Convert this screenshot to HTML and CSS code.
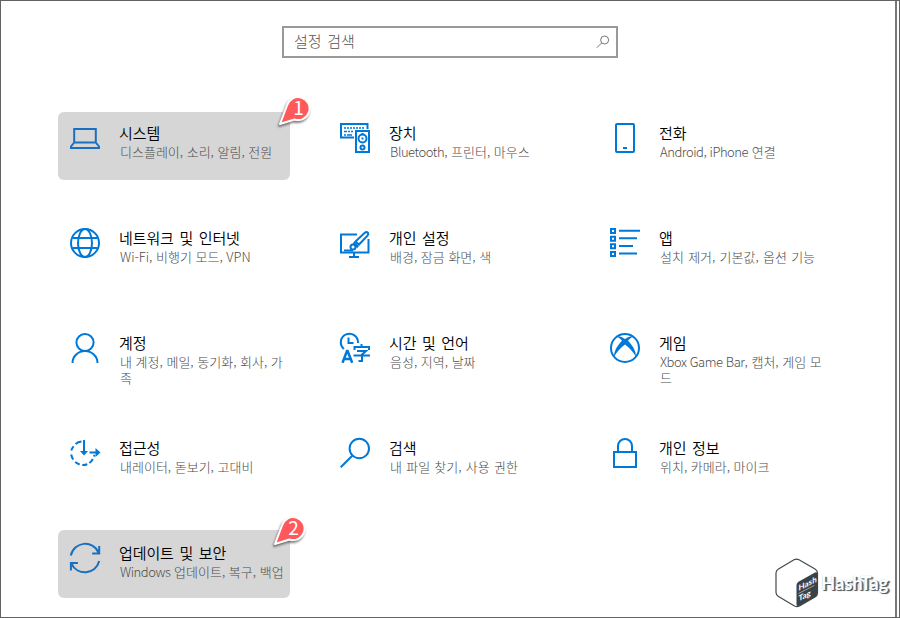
FILE: index.html
```html
<!DOCTYPE html>
<html lang="ko">
<head>
<meta charset="utf-8">
<title>설정</title>
<link rel="stylesheet" href="styles.css">
</head>
<body>
<div class="window">
<div class="search">
<span>설정 검색</span>
<svg width="14" height="14" viewBox="0 0 14 14"><circle cx="8.6" cy="5" r="4"/><path d="M5.7 7.9L.8 12.8"/></svg>
</div>

<div class="grid">
<div class="tile active">
<svg class="icon" viewBox="0 0 30 30"><path d="M4.200 6h21.600v13.500H4.200zM4.200 19.500L1 23.500v1.500h28v-1.500l-3.200-4"/></svg>
<div class="text"><h2>시스템</h2><p>디스플레이, 소리, 알림, 전원</p></div>
<svg class="badge" width="44" height="40" viewBox="0 0 44 40"><path class="pin" d="M10 31L17 12.500A11.500 11.500 0 1 1 24.500 26.500z"/><text x="28.500" y="22">1</text></svg>
</div>

<div class="tile">
<svg class="icon" viewBox="0 0 30 30"><path d="M14 14.500H1V1h26.500v5"/><path class="keys" d="M4 5h2m1 0h2m1 0h2m1 0h2m1 0h2m1 0h2m1 0h2M4 8.500h3m1 0h2m1 0h2M4 12h2m1 0h5"/><path d="M16 8h13v21H16z"/><circle cx="22.500" cy="15.500" r="4"/><circle cx="22.500" cy="24.500" r="2"/><path class="fill" d="M21.500 14.500h2v2h-2zM21.500 10h2v1h-2z"/></svg>
<div class="text"><h2>장치</h2><p><span class="en">Bluetooth</span>, 프린터, 마우스</p></div>
</div>

<div class="tile">
<svg class="icon" viewBox="0 0 30 30"><rect x="6" y="1" width="18" height="28" rx="1"/><path d="M13 25h4"/></svg>
<div class="text"><h2>전화</h2><p><span class="en">Android, iPhone</span> 연결</p></div>
</div>

<div class="tile">
<svg class="icon" viewBox="0 0 30 30"><circle cx="15" cy="15" r="14"/><ellipse cx="15" cy="15" rx="7" ry="14"/><path d="M2.500 10h25M2.500 20h25"/></svg>
<div class="text"><h2>네트워크 및 인터넷</h2><p>Wi-Fi, 비행기 모드, VPN</p></div>
</div>

<div class="tile">
<svg class="icon" viewBox="0 0 30 30"><path d="M17 6.500H1v18h27.500V11M14 25v4M9 29h10"/><path d="M15.500 13.500L24.500 5q2-1.500 3.200-.4t-.2 3L19 16.500z"/><path class="fill" d="M14.200 13.500l4.800 4.500-1.800 2.200-4.500-4.700z"/><circle cx="13" cy="19" r="2.500"/><path d="M4 22.500h9"/></svg>
<div class="text"><h2>개인 설정</h2><p>배경, 잠금 화면, 색</p></div>
</div>

<div class="tile">
<svg class="icon" viewBox="0 0 30 30"><path d="M1 1h4v4H1zM1 8.700h4v4H1zM1 16.300h4v4H1zM1 24h4v4H1zM9 2.700h21M9 10.300h18M9 17.900h14M9 25.500h18"/></svg>
<div class="text"><h2>앱</h2><p class="wide">설치 제거, 기본값, 옵션 기능</p></div>
</div>

<div class="tile">
<svg class="icon" viewBox="0 0 30 30"><circle cx="15" cy="9.500" r="8.600"/><path d="M2.500 30a12.500 12 0 0 1 25 0"/></svg>
<div class="text"><h2>계정</h2><p>내 계정, 메일, 동기화, 회사, 가족</p></div>
</div>

<div class="tile">
<svg class="icon" viewBox="0 0 30 30"><path d="M4 16A8.600 8.600 0 1 1 18 10M8.500 4.500V10h5"/><path class="heavy" d="M2.500 29.800L7 18h.6l4.600 11.800M4 26h6.500"/><path d="M21.500 11v3M14.500 17v-3h14.500v3M17 18h9l-4 3.500v6.500h-3.500M13.500 22.500H30"/></svg>
<div class="text"><h2>시간 및 언어</h2><p>음성, 지역, 날짜</p></div>
</div>

<div class="tile">
<svg class="icon" viewBox="0 0 30 30"><circle cx="15" cy="15" r="14"/><path class="fill" d="M6 3.500C9 2.500 12 4 15 6c3-2 6-3.500 9-2.500-2 .5-4.500 2.300-6 4.300 4.500 4.700 8.500 11 7.800 15.700C23.500 19 19 14.500 15 11.500 11 14.500 6.500 19 4.200 23.500 3.500 18.800 7.500 12.500 12 7.800 10.500 5.800 8 4 6 3.500z"/></svg>
<div class="text"><h2>게임</h2><p><span class="en">Xbox Game Bar</span>, 캡처, 게임 모드</p></div>
</div>

<div class="tile">
<svg class="icon" viewBox="0 0 30 30"><path d="M11.500 3.600A12 12 0 0 0 5.500 6M3.600 8.300A12 12 0 0 0 1.300 12.500M1.200 16.500a12 12 0 0 0 2.100 5M5.200 24a12 12 0 0 0 4.500 2.500M12.300 27a12 12 0 0 0 5-.8M19.400 25a12 12 0 0 0 3.500-4M24 18.500l.5-1.700M14 2v13M19.500 14.500H28"/><path class="fill" d="M10 13h8L14 17.500zM25.500 10l5 4.500-5 4.500z"/></svg>
<div class="text"><h2>접근성</h2><p>내레이터, 돋보기, 고대비</p></div>
</div>

<div class="tile">
<svg class="icon" viewBox="0 0 30 30"><circle cx="19.300" cy="10.500" r="9.700"/><path d="M12.500 17.500L.7 29.300"/></svg>
<div class="text"><h2>검색</h2><p class="wide">내 파일 찾기, 사용 권한</p></div>
</div>

<div class="tile">
<svg class="icon" viewBox="0 0 30 30"><path d="M4 14h22v15H4zM8 14V8a7 7 0 0 1 14 0v6"/></svg>
<div class="text"><h2>개인 정보</h2><p>위치, 카메라, 마이크</p></div>
</div>

<div class="tile active last">
<svg class="icon" viewBox="0 0 30 30"><path d="M.8 12.500C4 -1.500 23 -3.500 28.500 9.500M29.200 3v7.500h-7M29.200 18C26 31.500 7 33.500 1.500 20.500M.9 27.500v-7.500h7"/></svg>
<div class="text"><h2>업데이트 및 보안</h2><p><span class="en">Windows</span> 업데이트, 복구, 백업</p></div>
<svg class="badge" width="44" height="40" viewBox="0 0 44 40"><path class="pin" d="M10 31L17 12.500A11.500 11.500 0 1 1 24.500 26.500z"/><text x="28.500" y="22">2</text></svg>
</div>
</div>

<div class="watermark">
<svg width="44" height="50" viewBox="0 0 44 50"><path class="cube" d="M19 1.700q2.500-1.300 5 0L40 11q2.500 1.500 2.500 4v20q0 2.500-2.500 4l-15.500 9q-2.500 1.300-5 0L3.500 38.500Q1 37 1 34.500V15q0-2.500 2.500-4z"/><path class="side" d="M21.500 27q0-2 2-3.200L40 14.500q2.500-1 2.500 1.500v19q0 2.500-2.500 4l-16 9q-2.500 1-2.500-1.500z"/><g transform="translate(23.500 33) skewY(-27)"><text x="0" y="0">Hash</text><path d="M0 2.500h16"/><text x="0" y="10.500">Tag</text></g></svg>
<span>HashTag</span>
</div>
</div>
</body>
</html>
```
FILE: styles.css
```css
body {
  margin: 0;
  background: #fff;
  font-family: "Noto Sans CJK KR", sans-serif;
}

.window {
  position: relative;
  box-sizing: border-box;
  width: 900px;
  height: 618px;
  padding-top: 25px;
  border: 1px solid #626262;
  overflow: hidden;
}

/* scrollbar edge */
.window::after {
  content: "";
  position: absolute;
  top: 0;
  right: 2px;
  width: 2px;
  height: 100%;
  background: #777;
}

.search {
  display: flex;
  align-items: center;
  justify-content: space-between;
  box-sizing: border-box;
  width: 336px;
  height: 32px;
  margin-left: 281px;
  padding: 0 6px 3px 10px;
  border: 2px solid #999;
  color: #505050;
  font-size: 15px;
  font-weight: 300;
  word-spacing: 1.5px;
}

.search svg {
  fill: none;
  stroke: #777;
  stroke-width: 1;
  margin-top: 3px;
}

.grid {
  display: grid;
  grid-template-columns: 232px 232px 232px;
  grid-auto-rows: 68px;
  gap: 37px 38px;
  margin: 54px 0 0 57px;
}

.tile {
  position: relative;
  display: flex;
  gap: 20px;
  box-sizing: border-box;
  padding: 11px 0 0 12px;
  border-radius: 6px;
}

.active {
  background: #d6d6d6;
}

.last {
  height: 68px;
  margin-top: -2px;
  padding-top: 13px;
}

.icon {
  flex: none;
  width: 30px;
  height: 30px;
  overflow: visible;
  fill: none;
  stroke: #0078d7;
  stroke-width: 2;
}

.active .icon {
  stroke: #1870be;
}

.icon .fill {
  fill: #0078d7;
  stroke: none;
}

.icon .keys {
  stroke-width: 1.6;
}

.icon .heavy {
  stroke-width: 2.5;
}

.text {
  width: 168px;
}

.text h2 {
  margin: 0 0 0 -1px;
  color: #000;
  font-size: 15px;
  font-weight: 350;
  line-height: 20px;
  letter-spacing: -.1px;
  word-spacing: 1.5px;
}

.text p {
  margin: 1px 0 0;
  color: #4c4c4c;
  font-size: 13px;
  font-weight: 300;
  line-height: 16px;
  word-break: break-all;
}

.text .wide {
  word-spacing: .6px;
}

.en {
  display: inline-block;
  letter-spacing: -.45px;
}

.badge {
  position: absolute;
  left: 212px;
  top: -19px;
}

.last .badge {
  left: 207px;
  top: -17px;
}

.pin {
  fill: #ff595b;
  stroke: #fff;
  stroke-width: 2;
  stroke-linejoin: round;
  filter: drop-shadow(-1px 2px 1px rgba(0, 0, 0, .5));
}

.badge text {
  fill: #fff;
  font: 19px "Noto Sans CJK KR", sans-serif;
  text-anchor: middle;
}

.watermark {
  position: absolute;
  left: 774px;
  top: 557px;
  display: flex;
  align-items: center;
  gap: 2px;
}

.watermark svg {
  flex: none;
}

.cube {
  fill: #fff;
  stroke: #414a4e;
  stroke-width: 1.2;
}

.side {
  fill: #394347;
}

.watermark g path {
  stroke: #c5c9ca;
  stroke-width: .6;
}

.watermark text {
  fill: #fff;
  font: bold 8px Lato, sans-serif;
}

.watermark span {
  color: #fff;
  font: bold 18.5px Lato, sans-serif;
  letter-spacing: -.1px;
  text-shadow: 1px 1px 0 #59646a, 2px 1px 1px #59646a, 0 0 1px #aab0b3;
}
```
